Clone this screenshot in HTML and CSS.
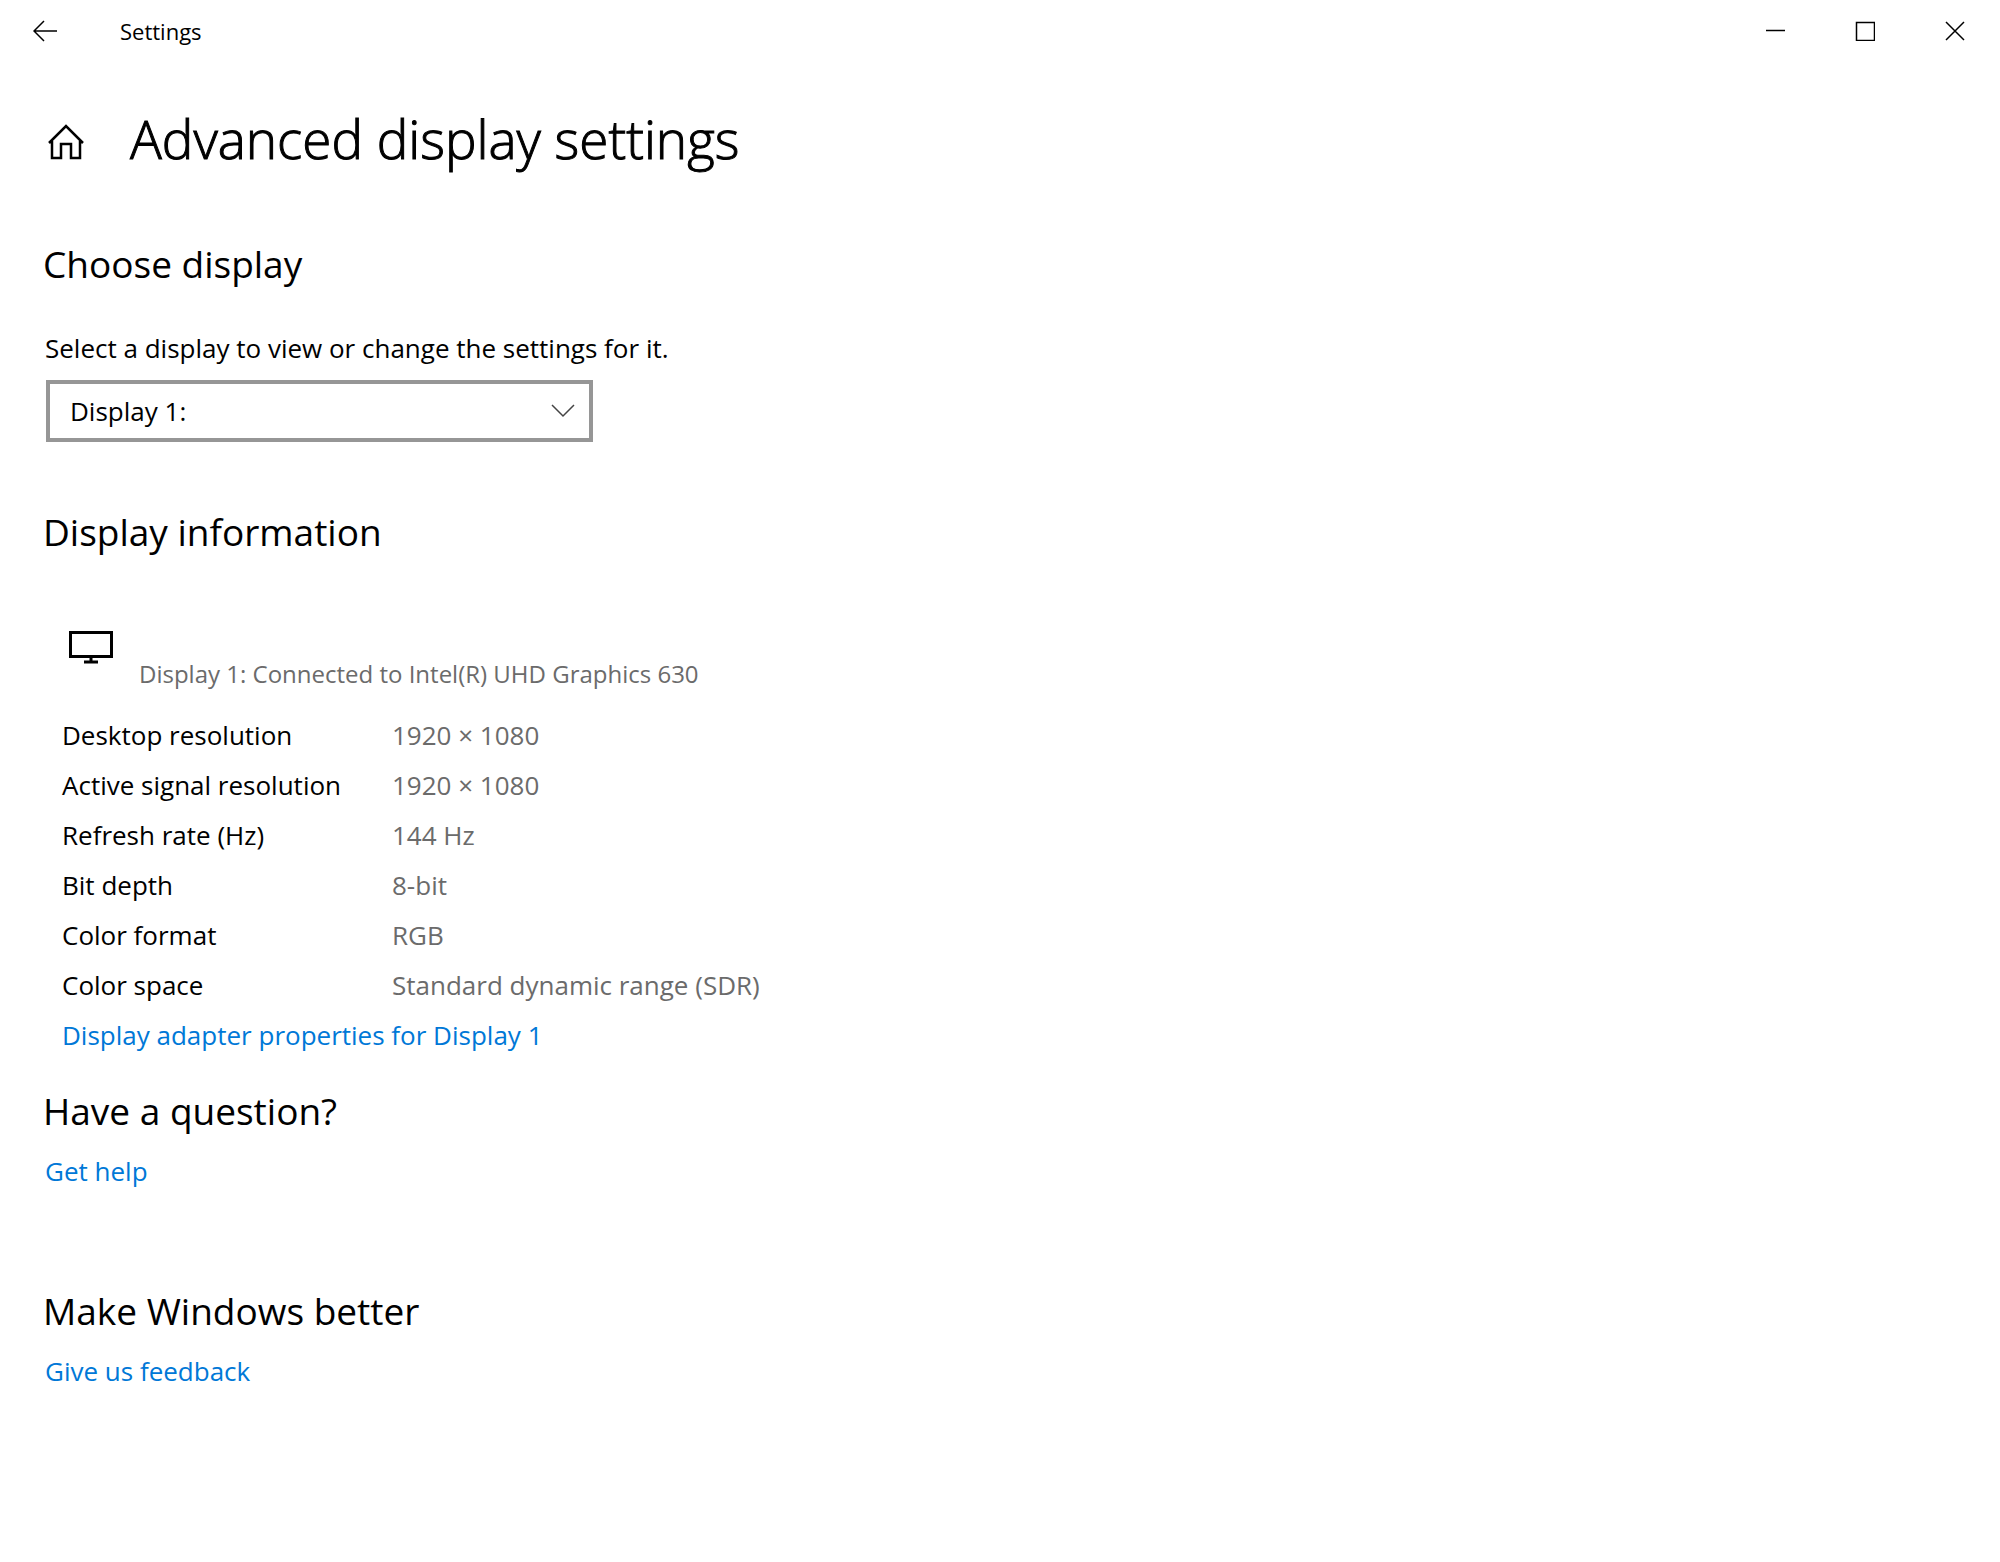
FILE: index.html
```html
<!DOCTYPE html>
<html lang="en">
<head>
<meta charset="utf-8">
<title>Settings</title>
<meta name="viewport" content="width=device-width, initial-scale=1">
<link rel="stylesheet" href="styles.css">
</head>
<body>
<header class="titlebar">
  <button class="titlebar-button back" type="button" aria-label="Back">
    <svg width="24" height="22" viewBox="0 0 24 22"><path d="M11 1 1 11l10 10M1 11h23"/></svg>
  </button>
  <span class="app-name">Settings</span>
  <div class="window-controls">
    <button class="titlebar-button" type="button" aria-label="Minimize">
      <svg width="20" height="20" viewBox="0 0 20 20"><path d="M1 9.500h19"/></svg>
    </button>
    <button class="titlebar-button" type="button" aria-label="Maximize">
      <svg width="20" height="20" viewBox="0 0 20 20"><path d="M1.500 1.500h18v18h-18z"/></svg>
    </button>
    <button class="titlebar-button" type="button" aria-label="Close">
      <svg width="20" height="20" viewBox="0 0 20 20"><path d="m1 1 18 18M19 1 1 19"/></svg>
    </button>
  </div>
</header>
<main class="page">
  <div class="page-header">
    <a class="home" href="#" aria-label="Home">
      <svg width="36" height="36" viewBox="0 0 36 36"><path d="M1 19 18 2l17 17M4 17v17h9V20h10v14h9V17"/></svg>
    </a>
    <h1 class="page-title">Advanced display settings</h1>
  </div>

  <section class="choose">
    <h2 class="section-title">Choose display</h2>
    <label class="select-label" for="display">Select a display to view or change the settings for it.</label>
    <div class="select-wrap">
      <select class="select" id="display"><option>Display 1:</option></select>
      <svg class="chevron" width="24" height="14" viewBox="0 0 24 14"><path d="m1 1 11 11L23 1"/></svg>
    </div>
  </section>

  <section class="information">
    <h2 class="section-title">Display information</h2>
    <div class="device">
      <svg class="monitor" width="44" height="34" viewBox="0 0 44 34"><path d="M1.500 2.500h41v24h-41zM22 26v6M15 32h14"/></svg>
      <p class="device-name">Display 1: Connected to Intel(R) UHD Graphics 630</p>
    </div>
    <table class="details">
      <tbody>
        <tr><th scope="row">Desktop resolution</th><td>1920 × 1080</td></tr>
        <tr><th scope="row">Active signal resolution</th><td>1920 × 1080</td></tr>
        <tr><th scope="row">Refresh rate (Hz)</th><td>144 Hz</td></tr>
        <tr><th scope="row">Bit depth</th><td>8-bit</td></tr>
        <tr><th scope="row">Color format</th><td>RGB</td></tr>
        <tr><th scope="row">Color space</th><td>Standard dynamic range (SDR)</td></tr>
      </tbody>
    </table>
    <a class="link adapter-link" href="#">Display adapter properties for Display 1</a>
  </section>

  <section class="help">
    <h2 class="section-title">Have a question?</h2>
    <a class="link" href="#">Get help</a>
  </section>

  <section class="feedback">
    <h2 class="section-title">Make Windows better</h2>
    <a class="link" href="#">Give us feedback</a>
  </section>
</main>
</body>
</html>
```
FILE: styles.css
```css
* {
  box-sizing: border-box;
}

body {
  margin: 0;
  background: #fff;
  color: #000;
  font-family: "Segoe UI", "Open Sans", "Noto Sans", sans-serif;
  font-size: 26px;
  line-height: 36px;
}

h1,
h2,
p {
  margin: 0;
  font-weight: 400;
}

svg {
  display: block;
  fill: none;
  stroke: currentColor;
  stroke-width: 1.5;
}

.titlebar {
  display: flex;
  align-items: center;
  height: 62px;
}

.titlebar-button {
  display: grid;
  place-items: center;
  width: 90px;
  height: 62px;
  padding: 0;
  border: 0;
  background: none;
  color: #000;
}

.app-name {
  margin-left: 30px;
  font-size: 22px;
  line-height: 32px;
}

.window-controls {
  display: flex;
  margin-left: auto;
}

.page {
  padding: 41px 43px;
}

.page-header {
  display: flex;
  align-items: center;
  gap: 46px;
  padding-left: 5px;
}

.home {
  padding-top: 6px;
  color: #000;
}

.home svg {
  stroke-width: 2.5;
}

.page-title {
  font-size: 53px;
  font-weight: 300;
  line-height: 72px;
  -webkit-text-stroke: 1px currentColor;
}

.section-title {
  font-size: 37px;
  line-height: 52px;
}

.choose {
  padding-top: 63px;
}

.information {
  padding-top: 64px;
}

.select-label {
  display: block;
  margin-top: 40px;
  padding-left: 2px;
}

.select-wrap {
  display: grid;
  align-items: center;
  width: 547px;
  max-width: 100%;
  margin: 14px 3px 0;
}

.select {
  grid-area: 1 / 1;
  width: 100%;
  height: 62px;
  padding: 0 60px 0 20px;
  border: 4px solid #969696;
  border-radius: 0;
  appearance: none;
  background: #fff;
  color: #000;
  font: inherit;
}

.chevron {
  grid-area: 1 / 1;
  justify-self: end;
  margin-right: 18px;
  color: #444;
  pointer-events: none;
}

.device {
  display: flex;
  align-items: flex-start;
  gap: 26px;
  margin-top: 72px;
  padding-left: 26px;
}

.monitor {
  flex: none;
  stroke-width: 3;
}

.device-name {
  padding-top: 28px;
  color: #6b6b6b;
  font-size: 24px;
  line-height: 32px;
}

.details {
  margin: 20px 0 0 19px;
  border-collapse: collapse;
}

.details th,
.details td {
  padding: 0;
  font-weight: 400;
  line-height: 50px;
  text-align: left;
}

.details th {
  width: 330px;
}

.details td {
  color: #6b6b6b;
}

.link {
  display: block;
  width: fit-content;
  margin: 16px 0 0 2px;
  color: #0078d7;
  text-decoration: none;
}

.link:hover {
  color: #666;
}

.adapter-link {
  margin: 0 0 0 19px;
  line-height: 50px;
}

.help {
  padding-top: 25px;
}

.feedback {
  padding-top: 96px;
}
```
